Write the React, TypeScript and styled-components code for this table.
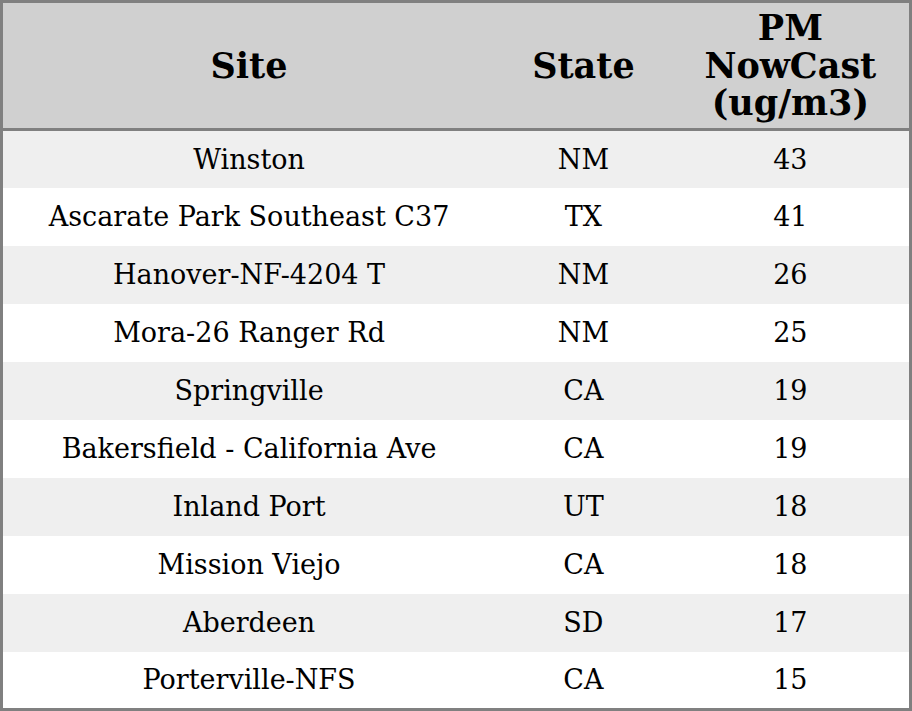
import React from 'react';
import styled, {createGlobalStyle} from "styled-components";

const GlobalStyle = createGlobalStyle`
  body {
    margin: 0;
    background: #ffffff;
  }
`

const Table = styled.table`
  width: 912px;
  border-collapse: collapse;
  border: 3px solid #808080;
  font-family: "DejaVu Serif", serif;
  color: #000;
  table-layout: fixed;
`

const HeadRow = styled.tr`
  background: #d0d0d0;
  border-bottom: 3px solid #808080;
`

const HeadCell = styled.th<{ $width: number }>`
  width: ${props => props.$width}px;
  height: 128px;
  padding: 0 4px;
  font-size: 35px;
  font-weight: bold;
  line-height: 37.5px;
  text-align: center;
  vertical-align: middle;
  box-sizing: border-box;
`

const Row = styled.tr<{ $shade: boolean }>`
  background: ${props => props.$shade ? '#efefef' : '#ffffff'};
`

const Cell = styled.td`
  height: 58px;
  padding: 0;
  font-size: 27px;
  text-align: center;
  vertical-align: middle;
  box-sizing: border-box;
`

interface Reading {
    site: string;
    state: string;
    pm: number;
}

const readings: Reading[] = [
    {site: 'Winston', state: 'NM', pm: 43},
    {site: 'Ascarate Park Southeast C37', state: 'TX', pm: 41},
    {site: 'Hanover-NF-4204 T', state: 'NM', pm: 26},
    {site: 'Mora-26 Ranger Rd', state: 'NM', pm: 25},
    {site: 'Springville', state: 'CA', pm: 19},
    {site: 'Bakersfield - California Ave', state: 'CA', pm: 19},
    {site: 'Inland Port', state: 'UT', pm: 18},
    {site: 'Mission Viejo', state: 'CA', pm: 18},
    {site: 'Aberdeen', state: 'SD', pm: 17},
    {site: 'Porterville-NFS', state: 'CA', pm: 15},
];

function App() {
    return (
        <>
            <GlobalStyle/>
            <Table>
                <thead>
                <HeadRow>
                    <HeadCell $width={492}>Site</HeadCell>
                    <HeadCell $width={176}>State</HeadCell>
                    <HeadCell $width={238}>PM<br/>NowCast<br/>(ug/m3)</HeadCell>
                </HeadRow>
                </thead>
                <tbody>
                {readings.map((r, i) => (
                    <Row key={r.site} $shade={i % 2 === 0}>
                        <Cell>{r.site}</Cell>
                        <Cell>{r.state}</Cell>
                        <Cell>{r.pm}</Cell>
                    </Row>
                ))}
                </tbody>
            </Table>
        </>
    );
}

export default App;
